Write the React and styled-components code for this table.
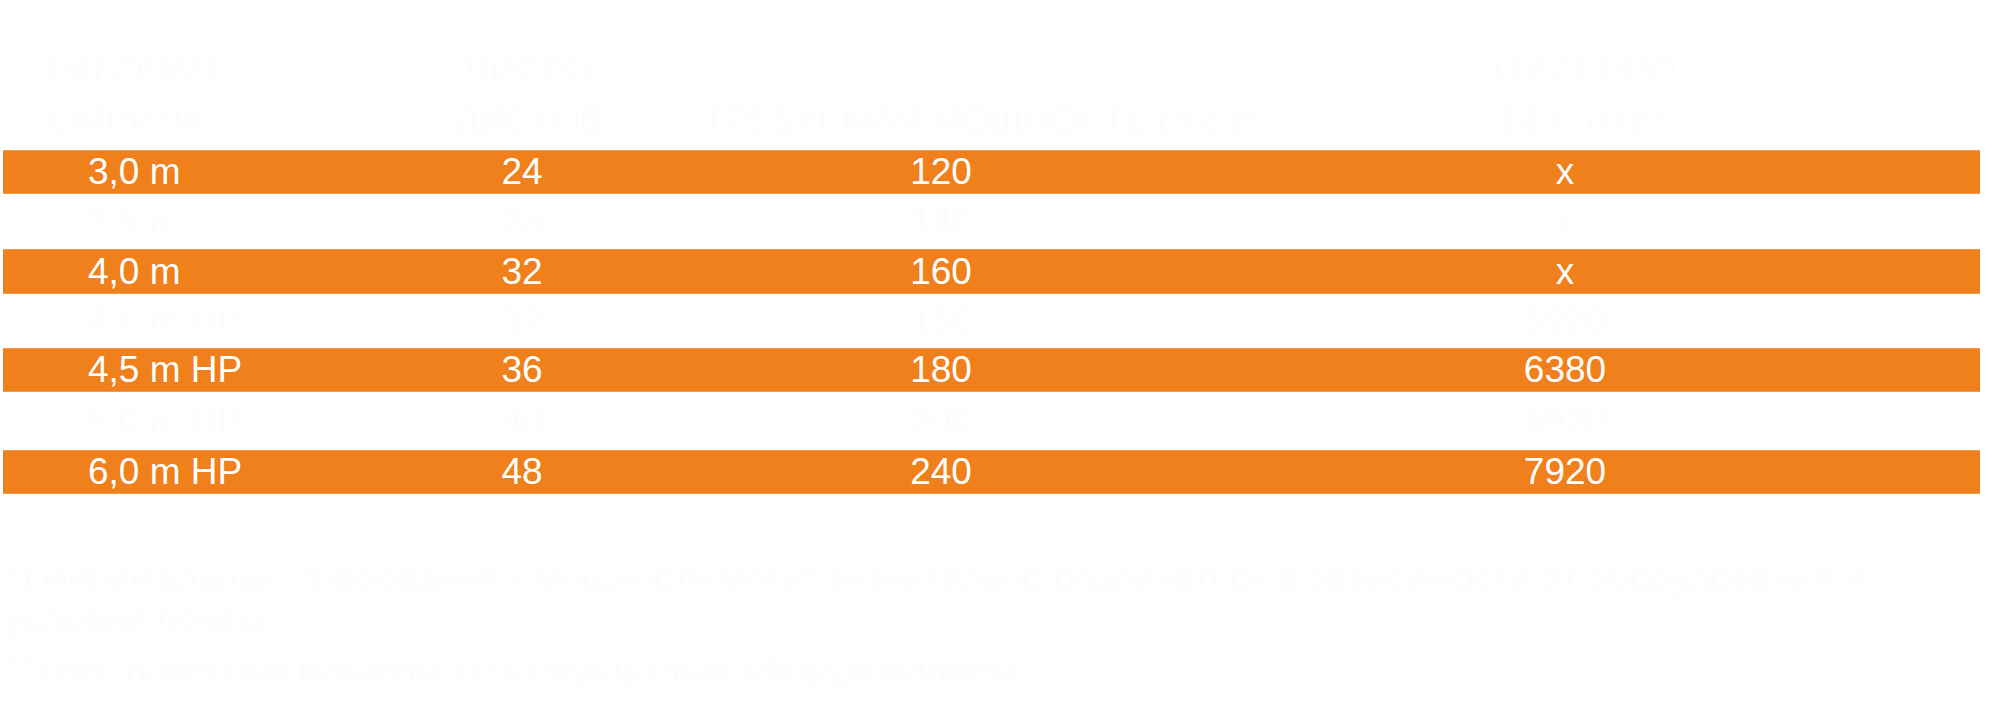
import React from "react";
import styled, { createGlobalStyle } from "styled-components";

const GlobalStyle = createGlobalStyle`
    html, body {
        margin: 0;
        padding: 0;
        background: #ffffff;
    }
    body {
        font-family: "Liberation Sans", Arial, sans-serif;
        width: 2010px;
        height: 701px;
        overflow: hidden;
    }
`

const cols = "297px 444px 400px 1fr";

const Page = styled.div`
    padding: 46px 30px 0 3px;
    color: #fdfdfd;
`

const HeadRow = styled.div`
    display: grid;
    grid-template-columns: ${cols};
    height: 100px;
    font-size: 36px;
    line-height: 50px;
    margin-bottom: 4px;
`

const HeadCell = styled.div`
    align-self: end;
    text-align: ${(p) => (p.$left ? "left" : "center")};
    padding-left: ${(p) => p.$pad || 0}px;
    margin-left: ${(p) => p.$shift || 0}px;
    white-space: nowrap;
`

const Table = styled.div`
    display: grid;
    grid-template-rows: 44px 55px 45px 54px 44px 58px 44px;
    width: 1977px;
`

const Row = styled.div`
    display: grid;
    grid-template-columns: ${cols};
    align-items: center;
    font-size: 37px;
    background: ${(p) => (p.$hl ? "#ef801b" : "transparent")};
    color: ${(p) => (p.$hl ? "#ffffff" : "#fdfdfd")};
    box-shadow: ${(p) => (p.$hl ? "inset 0 1px 0 #f29a4c, inset 0 -1px 0 #f29a4c" : "none")};
`

const Cell = styled.div`
    text-align: ${(p) => (p.$left ? "left" : "center")};
    padding-left: ${(p) => (p.$left ? 85 : p.$pad || 0)}px;
    margin-left: ${(p) => p.$shift || 0}px;
    white-space: nowrap;
`

const Notes = styled.div`
    margin-top: 63px;
    margin-left: 2px;
    font-size: 37.3px;
    line-height: 41px;
    color: #fdfdfd;
    white-space: nowrap;
`

const Note = styled.p`
    margin: 0 0 9px 0;
`

const rows = [
    ["3,0 m", "24", "120", "x"],
    ["3,5 m", "28", "140", "x"],
    ["4,0 m", "32", "160", "x"],
    ["4,0 m HP", "32", "160", "5920"],
    ["4,5 m HP", "36", "180", "6380"],
    ["5,0 m HP", "40", "200", "6920"],
    ["6,0 m HP", "48", "240", "7920"],
];

export default function App() {
    return (
        <>
            <GlobalStyle />
            <Page>
                <HeadRow>
                    <HeadCell $left $pad={44}>РАБОЧАЯ<br />ШИРИНА</HeadCell>
                    <HeadCell $pad={14}>ЧИСЛО<br />ДИСКОВ</HeadCell>
                    <HeadCell $left $shift={-42}>ТРЕБУЕМАЯ МОЩНОСТЬ (л.с.)*</HeadCell>
                    <HeadCell $pad={46}>U 671 PRO<br />ВЕС (кг)**</HeadCell>
                </HeadRow>

                <Table>
                    {rows.map((r, i) => (
                        <Row key={r[0]} $hl={i % 2 === 0}>
                            <Cell $left>{r[0]}</Cell>
                            <Cell>{r[1]}</Cell>
                            <Cell $shift={-6}>{r[2]}</Cell>
                            <Cell $pad={6}>{r[3]}</Cell>
                        </Row>
                    ))}
                </Table>

                <Notes>
                    <Note>
                        *) минимальные требования к мощности могут значительно различаться в зависимости от оборудования и
                        <br />
                        условий почвы
                    </Note>
                    <Note>**) вес навесной машины со стандартным оборудованием.</Note>
                </Notes>
            </Page>
        </>
    );
}
